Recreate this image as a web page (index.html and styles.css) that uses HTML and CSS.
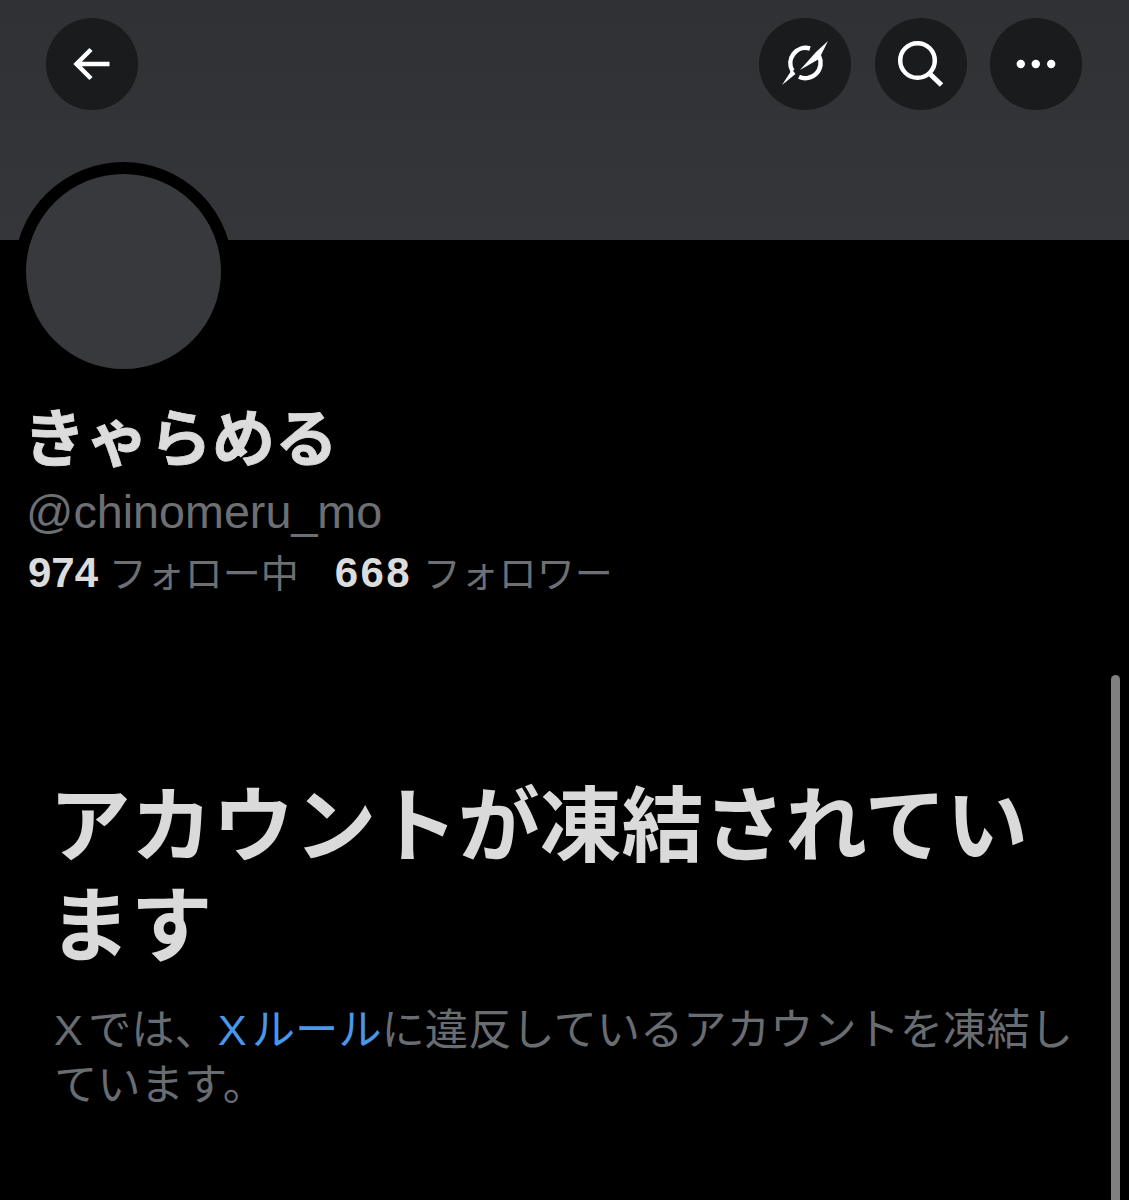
FILE: index.html
```html
<!DOCTYPE html>
<html lang="ja">
<head>
<meta charset="utf-8">
<title>きゃらめる</title>
<link rel="stylesheet" href="styles.css">
</head>
<body>
<div class="page">
  <header class="banner">
    <button class="icon-btn" aria-label="戻る">
      <svg viewBox="0 0 92 92" class="icon"><path d="M63.500 46H31M45 31.500 30.500 46 45 60.500" fill="none" stroke="#fff" stroke-width="4.500"/></svg>
    </button>
    <div class="actions">
      <button class="icon-btn" aria-label="Grok">
        <svg viewBox="0 0 92 92" class="icon">
          <path d="M51 30.500A15.300 15.300 0 0 0 33.500 53" fill="none" stroke="#fff" stroke-width="4.500"/>
          <path d="M33 51.500 23 67 36.500 56Z" fill="#fff"/>
          <path d="M40 58.800A15.300 15.300 0 0 0 60 38" fill="none" stroke="#fff" stroke-width="4.500"/>
          <path d="M69 23 57 34 41 52 60 41Z" fill="#fff"/>
        </svg>
      </button>
      <button class="icon-btn" aria-label="検索">
        <svg viewBox="0 0 92 92" class="icon"><circle cx="42.500" cy="42.500" r="17.300" fill="none" stroke="#fff" stroke-width="4.500"/><path d="M55 56 66.500 67" fill="none" stroke="#fff" stroke-width="5"/></svg>
      </button>
      <button class="icon-btn" aria-label="その他">
        <svg viewBox="0 0 92 92" class="icon"><circle cx="30.800" cy="46" r="4.200" fill="#fff"/><circle cx="45.800" cy="46" r="4.200" fill="#fff"/><circle cx="61.200" cy="46" r="4.200" fill="#fff"/></svg>
      </button>
    </div>
  </header>
  <main class="content">
    <div class="avatar"></div>
    <h1 class="name">きゃらめる</h1>
    <p class="handle">@chinomeru_mo</p>
    <div class="stats">
      <span class="stat"><b class="num">974</b> <span class="label">フォロー中</span></span>
      <span class="stat"><b class="num num-wide">668</b> <span class="label">フォロワー</span></span>
    </div>
    <section class="notice">
      <h2 class="notice-title">アカウントが凍結されています</h2>
      <p class="notice-body"><span class="latin">X</span>では、<a class="link" href="#"><span class="latin">X</span>ルール</a>に違反しているアカウントを凍結しています。</p>
    </section>
    <div class="scrollbar"></div>
  </main>
</div>
</body>
</html>
```
FILE: styles.css
```css
* { box-sizing: border-box; }
html, body { margin: 0; height: 100%; background: #000; }
body { overflow: hidden; font-family: "Liberation Sans", "Noto Sans CJK JP", sans-serif; }
.page { width: 1129px; height: 1200px; display: flex; flex-direction: column; }
.banner {
  height: 240px;
  flex: none;
  background: linear-gradient(#2f3134, #343639);
  display: flex;
  justify-content: space-between;
  align-items: flex-start;
  padding: 17.500px 47px 17.500px 46px;
}
.actions { display: flex; gap: 23.500px; }
.icon-btn {
  width: 92px;
  height: 92px;
  padding: 0;
  border: 0;
  border-radius: 50%;
  background: #1a1b1d;
}
.icon { display: block; width: 92px; height: 92px; }
.content { position: relative; flex: 1; padding-left: 28px; }
.avatar {
  width: 219px;
  height: 219px;
  margin: -78px 0 0 -14px;
  border: 12px solid #000;
  border-radius: 50%;
  background: #38393c;
}
.name {
  margin: 18px 0 0 -5px;
  font-size: 63px;
  line-height: 80px;
  font-weight: 700;
  color: #dcdcdc;
  -webkit-text-stroke: 0.8px #dcdcdc;
}
.handle {
  margin: 6px 0 0 -2px;
  font-size: 46.700px;
  line-height: 54px;
  color: #6d6f73;
}
.stats { display: flex; gap: 36px; margin-top: 10px; align-items: baseline; }
.stat { font-size: 38px; line-height: 48px; white-space: nowrap; }
.num { font-size: 42px; color: #dcdcdc; }
.num-wide { letter-spacing: 2.500px; }
.label { color: #6d6f73; }
.notice { width: 1050px; margin: 179px 0 0 21px; }
.notice-title {
  margin: 0;
  font-size: 81.800px;
  line-height: 100px;
  font-weight: 700;
  color: #dadada;
}
.notice-body {
  margin: 26px 0 0 5px;
  font-size: 43.300px;
  line-height: 55px;
  color: #696c70;
}
.latin { letter-spacing: 5px; }
.link { color: #4a96e8; text-decoration: none; }
.scrollbar {
  position: absolute;
  top: 435px;
  right: 9px;
  width: 9px;
  bottom: 0;
  border-radius: 4.500px 4.500px 0 0;
  background: #808080;
}
```
